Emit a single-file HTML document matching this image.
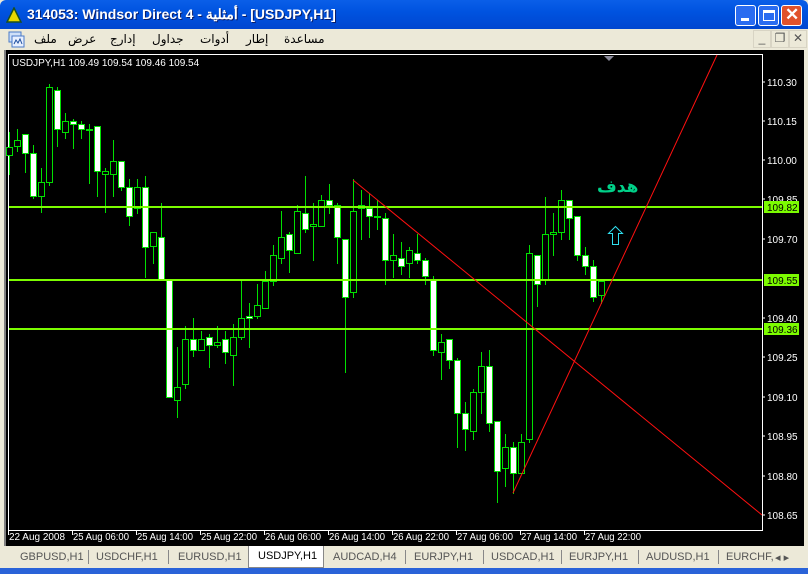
<!DOCTYPE html>
<html><head><meta charset="utf-8"><style>
*{margin:0;padding:0;box-sizing:border-box}
body{width:808px;height:574px;overflow:hidden;background:#ECE9D8;font-family:"Liberation Sans","Noto Sans CJK SC",sans-serif;position:relative}
#title{position:absolute;left:0;top:0;width:808px;height:29px;background:linear-gradient(#0A5FE8,#0053E0 40%,#0046D0);border-radius:6px 6px 0 0}
#title .t{position:absolute;left:27px;top:6px;color:#fff;font-weight:bold;font-size:14px;white-space:nowrap;text-shadow:1px 1px #0a1e6a}
.wb{position:absolute;top:5px;width:21px;height:21px;border:1px solid #fff;border-radius:3px;background:#2a6cf0}
#menu{position:absolute;left:0;top:29px;width:808px;height:21px;background:#ECE9D8;font-size:12px}
#menu span{position:absolute;top:3px;font-family:"Liberation Sans","DejaVu Sans",sans-serif}
#chart{position:absolute;left:4px;top:50px;width:800px;height:496px;background:#000;border-left:2px solid #808080}
#tabs{position:absolute;left:0;top:546px;width:808px;height:22px;background:#ECE9D8;font-size:11px;color:#555}
#tabs span{position:absolute;top:5px}
#tabs i{position:absolute;top:4px;width:1px;height:14px;background:#888}
#bot{position:absolute;left:0;top:568px;width:808px;height:6px;background:#2a63d8}
</style></head><body>
<div id="title">
<svg style="position:absolute;left:6px;top:7px" width="16" height="16"><polygon points="8,1 15,15 1,15" fill="#e8d800" stroke="#1a5020" stroke-width="1.5"/></svg>
<div class="t">314053: Windsor Direct 4 - أمثلية - [USDJPY,H1]</div>
<div class="wb" style="left:735px"><div style="position:absolute;left:5px;top:12px;width:8px;height:3px;background:#fff"></div></div>
<div class="wb" style="left:758px"><div style="position:absolute;left:4px;top:4px;width:12px;height:11px;border:1px solid #fff;border-top-width:3px"></div></div>
<div class="wb" style="left:781px;background:#e0522c"><div style="position:absolute;left:3px;top:-1px;color:#fff;font-weight:bold;font-size:17px">✕</div></div>
</div>
<div id="menu">
<svg style="position:absolute;left:8px;top:2px" width="17" height="17"><rect x="1" y="1" width="12" height="10" fill="#cfe0f8" stroke="#4a7ac8"/><rect x="4" y="5" width="12" height="11" fill="#e8f0ff" stroke="#4a7ac8"/><path d="M6 13 l2-4 2 3 2-4 2 5" stroke="#2050a0" fill="none"/></svg>
<span style="left:34px">ملف</span><span style="left:68px">عرض</span><span style="left:110px">إدارج</span><span style="left:152px">جداول</span><span style="left:200px">أدوات</span><span style="left:246px">إطار</span><span style="left:284px">مساعدة</span>
<span style="left:753px;top:1px;width:18px;height:18px;border:1px solid #d8d4c4;text-align:center;color:#555">_</span>
<span style="left:771px;top:1px;width:18px;height:18px;border:1px solid #d8d4c4;text-align:center;color:#555">❐</span>
<span style="left:789px;top:1px;width:18px;height:18px;border:1px solid #d8d4c4;text-align:center;color:#555;font-weight:bold">✕</span>
</div>
<div id="chart"></div>
<svg id="s" style="position:absolute;left:0;top:0" width="808" height="574" font-family="Liberation Sans, sans-serif" font-size="10">
<rect x="8.5" y="54.5" width="754" height="476" fill="none" stroke="#fff"/>
<text x="12" y="66" fill="#fff">USDJPY,H1  109.49 109.54 109.46 109.54</text>
<polygon points="604,56 614,56 609,61" fill="#8a8a9a"/>
<g id="c"></g>
<g stroke="#7CFC00" stroke-width="2"><line x1="9" y1="207" x2="762" y2="207"/><line x1="9" y1="280" x2="762" y2="280"/><line x1="9" y1="329" x2="762" y2="329"/></g>
<g stroke="#ff1010" stroke-width="1"><line x1="353" y1="180" x2="762" y2="515"/><line x1="513" y1="493" x2="717" y2="55"/></g>
<text x="597" y="192" fill="#00d088" font-size="17" font-family="Liberation Sans, DejaVu Sans, sans-serif" font-weight="bold">هدف</text>
<path d="M615.5 226.5 l7 7 h-4 v11 h-6 v-11 h-4 z" fill="none" stroke="#30e0f0"/>
<g fill="#fff" id="pl"></g>
<g id="hl"></g>
<g fill="#fff" id="dl"></g>
</svg>
<div id="tabs">
<span style="left:20px">GBPUSD,H1</span><i style="left:88px"></i><span style="left:96px">USDCHF,H1</span><i style="left:168px"></i><span style="left:178px">EURUSD,H1</span>
<span style="left:248px;top:0;height:22px;width:76px;background:#fff;border:1px solid #888;border-top:none;color:#000;padding:4px 0 0 9px">USDJPY,H1</span>
<span style="left:333px">AUDCAD,H4</span><i style="left:405px"></i><span style="left:414px">EURJPY,H1</span><i style="left:483px"></i><span style="left:491px">USDCAD,H1</span><i style="left:561px"></i><span style="left:569px">EURJPY,H1</span><i style="left:638px"></i><span style="left:646px">AUDUSD,H1</span><i style="left:718px"></i><span style="left:726px">EURCHF,</span><span style="left:775px">◂ ▸</span>
</div>
<div id="bot"></div>
<script>
var C=[["B",132,147,155,174],["B",129,140,146,151],["W",134,134,153,172],["W",145,153,196,198],["B",168,182,196,212],["B",84,87,182,185],["W",87,90,129,146],["B",113,121,132,138],["W",119,121,124,148],["W",121,124,129,138],["B",124,129,130,183],["W",126,126,171,196],["B",168,171,174,212],["B",140,161,174,196],["W",161,161,187,190],["W",179,187,216,225],["B",179,187,208,213],["W",176,187,247,277],["B",232,232,246,263],["W",203,237,280,280],["W",280,280,397,397],["B",347,387,400,417],["B",326,339,384,388],["W",318,339,350,356],["B",331,339,350,350],["W",334,337,345,367],["B",326,342,345,347],["W",331,339,352,363],["B",324,337,355,385],["B",281,318,337,339],["W",303,316,318,347],["B",284,305,316,318],["B",271,281,308,308],["B",245,255,281,285],["B",211,237,258,263],["W",232,234,250,272],["B",205,211,253,253],["W",176,213,229,232],["B",203,224,226,260],["B",195,200,226,226],["W",184,200,205,213],["W",203,205,237,263],["W",239,239,297,372],["B",179,211,292,297],["B",190,205,208,239],["W",193,208,216,237],["B",200,216,217,229],["W",213,218,260,284],["B",234,255,260,277],["W",242,258,266,274],["B",247,250,263,277],["W",234,253,260,263],["W",258,260,276,284],["W",276,280,350,355],["B",334,342,352,379],["W",339,339,360,368],["W",358,360,413,447],["W",402,413,429,450],["B",389,392,431,439],["B",352,366,392,413],["W",350,366,423,431],["W",421,421,471,502],["B",434,447,468,486],["W",442,447,473,493],["B",434,442,473,473],["B",245,253,439,442],["W",255,255,284,306],["B",197,234,280,284],["B",213,232,234,255],["B",190,200,232,239],["W",200,200,218,239],["W",216,216,255,260],["W",247,255,266,274],["W",260,266,297,301],["B",281,281,295,303]];
var g=document.getElementById('c'),h='';
C.forEach(function(c,i){var x=9+8*i;h+='<line x1="'+(x+.5)+'" y1="'+c[1]+'" x2="'+(x+.5)+'" y2="'+(c[4]+1)+'" stroke="#00e000"/>';
var bh=Math.max(c[3]-c[2],1);h+='<rect x="'+(x-2.5)+'" y="'+(c[2]+.5)+'" width="6" height="'+bh+'" fill="'+(c[0]=="W"?"#fff":"#000")+'" stroke="#00e000"/>';});
g.innerHTML=h;
var P=[["110.30",82],["110.15",121],["110.00",160],["109.85",199],["109.70",239],["109.40",318],["109.25",357],["109.10",397],["108.95",436],["108.80",476],["108.65",515]],s='';
P.forEach(function(p){s+='<line x1="762" y1="'+p[1]+'" x2="765" y2="'+p[1]+'" stroke="#fff"/><text x="767" y="'+(p[1]+4)+'">'+p[0]+'</text>';});
document.getElementById('pl').innerHTML=s;
var H=[["109.82",207],["109.55",280],["109.36",329]];s='';
H.forEach(function(p){s+='<rect x="764" y="'+(p[1]-6)+'" width="35" height="12" fill="#7CFC00"/><text x="767" y="'+(p[1]+4)+'" fill="#000">'+p[0]+'</text>';});
document.getElementById('hl').innerHTML=s;
var D=["22 Aug 2008","25 Aug 06:00","25 Aug 14:00","25 Aug 22:00","26 Aug 06:00","26 Aug 14:00","26 Aug 22:00","27 Aug 06:00","27 Aug 14:00","27 Aug 22:00"];s='';
D.forEach(function(d,i){var x=8+64*i;s+='<line x1="'+(x+.5)+'" y1="530" x2="'+(x+.5)+'" y2="535" stroke="#fff"/><text x="'+(x+1)+'" y="540" textLength="56" lengthAdjust="spacingAndGlyphs">'+d+'</text>';});
document.getElementById('dl').innerHTML=s;
</script>
</body></html>
